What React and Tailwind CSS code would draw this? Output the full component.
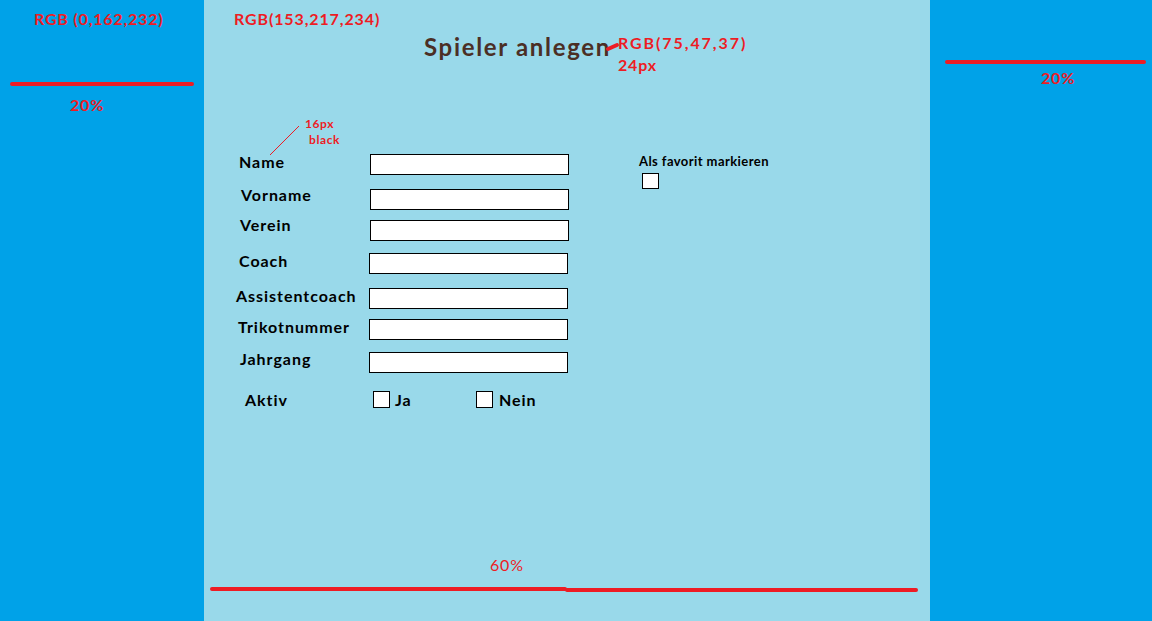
import React from 'react';

const fields = [
  { label: 'Name', row: '', lab: 'ml-[1px] -mt-[3px]', inp: '' },
  { label: 'Vorname', row: 'mt-[14px]', lab: 'ml-[3px] -mt-[5px]', inp: '' },
  { label: 'Verein', row: 'mt-[10px]', lab: 'ml-[2px] -mt-[6px]', inp: '' },
  { label: 'Coach', row: 'mt-[12px]', lab: 'ml-[1px] -mt-[3px]', inp: '-ml-[1px]' },
  { label: 'Assistentcoach', row: 'mt-[14px]', lab: '-ml-[2px] -mt-[3px]', inp: '-ml-[1px]' },
  { label: 'Trikotnummer', row: 'mt-[10px]', lab: 'ml-0 -mt-[3px]', inp: '-ml-[1px]' },
  { label: 'Jahrgang', row: 'mt-[12px]', lab: 'ml-[2px] -mt-[4px]', inp: '-ml-[1px]' },
];

function Box({ className = '' }) {
  return <div className={`w-[17px] h-[17px] shrink-0 bg-white border border-black ${className}`} />;
}

function Note({ className, children }) {
  return (
    <span className={`absolute text-[#ed1c24] whitespace-nowrap ${className}`}>{children}</span>
  );
}

export default function App() {
  return (
    <div className="relative flex h-[621px] w-[1152px] overflow-hidden font-['Lato',_sans-serif]">
      <div className="w-[204px] bg-[#00a2e8]" />

      <main className="flex-1 bg-[#99d9ea]">
        <h1 className="ml-[220px] pt-[31px] text-[24px] leading-[32px] font-bold tracking-[0.07em] text-[#4b2f25]">
          Spieler anlegen
        </h1>

        <div className="mt-[91px] flex pl-[34px]">
          <form className="flex flex-col text-[16px] font-bold tracking-[0.06em] text-black">
            {fields.map(f => (
              <div key={f.label} className={`flex items-start ${f.row}`}>
                <div className="w-[132px] whitespace-nowrap">
                  <span className={`block leading-[21px] ${f.lab}`}>{f.label}</span>
                </div>
                <input type="text" className={`w-[199px] h-[21px] bg-white border border-black ${f.inp}`} />
              </div>
            ))}

            <div className="mt-[18px] flex h-[17px] items-center leading-[17px]">
              <div className="w-[135px]">
                <span className="ml-[7px]">Aktiv</span>
              </div>
              <div className="flex w-[103px] items-center">
                <Box />
                <span className="ml-[5px]">Ja</span>
              </div>
              <div className="flex items-center">
                <Box />
                <span className="ml-[6px]">Nein</span>
              </div>
            </div>
          </form>

          <div className="ml-[70px] -mt-[1px] flex flex-col">
            <span className="text-[13px] leading-[16px] font-bold tracking-[0.033em] text-black whitespace-nowrap">
              Als favorit markieren
            </span>
            <Box className="ml-[3px] mt-[4px] !h-[16px]" />
          </div>
        </div>
      </main>

      <div className="w-[222px] bg-[#00a2e8]" />

      {/* annotations */}
      <Note className="left-[34px] top-[11px] text-[16px] leading-[16px] font-bold tracking-[0.05em]">RGB (0,162,232)</Note>
      <Note className="left-[234px] top-[11px] text-[16px] leading-[16px] font-bold tracking-[0.055em]">RGB(153,217,234)</Note>
      <Note className="left-[618px] top-[35px] text-[16px] leading-[16px] font-bold tracking-[0.12em]">RGB(75,47,37)</Note>
      <Note className="left-[618px] top-[57px] text-[16px] leading-[16px] font-bold tracking-[0.05em]">24px</Note>
      <Note className="left-[70px] top-[97px] text-[16px] leading-[16px] font-bold tracking-[0.05em]">20%</Note>
      <Note className="left-[1041px] top-[70px] text-[16px] leading-[16px] font-bold tracking-[0.05em]">20%</Note>
      <Note className="left-[305px] top-[118px] text-[12px] leading-[12px] font-bold tracking-[0.05em]">16px</Note>
      <Note className="left-[309px] top-[134px] text-[12px] leading-[12px] font-bold tracking-[0.05em]">black</Note>
      <Note className="left-[490px] top-[557px] text-[16px] leading-[16px] tracking-[0.05em]">60%</Note>

      <div className="absolute left-[10px] top-[82px] h-[4px] w-[184px] rounded-full bg-[#ed1c24]" />
      <div className="absolute left-[945px] top-[60px] h-[4px] w-[201px] rounded-full bg-[#ed1c24]" />
      <div className="absolute left-[210px] top-[587px] h-[4px] w-[357px] rounded-full bg-[#ed1c24]" />
      <div className="absolute left-[565px] top-[588px] h-[4px] w-[353px] rounded-full bg-[#ed1c24]" />

      <svg className="absolute left-0 top-0 pointer-events-none" width="1152" height="621">
        <line x1="270" y1="155" x2="299" y2="126" stroke="#ed1c24" strokeWidth="1" />
        <line x1="608" y1="49" x2="617" y2="45" stroke="#ed1c24" strokeWidth="4" strokeLinecap="round" />
      </svg>
    </div>
  );
}
